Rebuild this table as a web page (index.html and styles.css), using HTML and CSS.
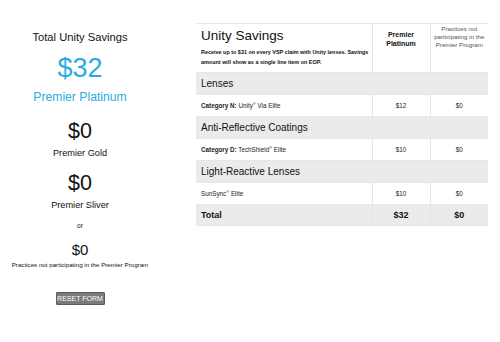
FILE: index.html
```html
<!DOCTYPE html>
<html>
<head>
<meta charset="utf-8">
<link rel="stylesheet" href="styles.css">
</head>
<body>
<div class="page">
  <aside class="summary">
    <h2 class="summary-title">Total Unity Savings</h2>
    <div class="amount amount-main">$32</div>
    <div class="tier tier-main">Premier Platinum</div>
    <div class="amount amount-mid">$0</div>
    <div class="tier">Premier Gold</div>
    <div class="amount amount-mid">$0</div>
    <div class="tier">Premier Sliver</div>
    <div class="or">or</div>
    <div class="amount amount-small">$0</div>
    <div class="tier-note">Practices not participating in the Premier Program</div>
    <button class="reset">RESET FORM</button>
  </aside>
  <table class="savings">
    <colgroup>
      <col class="c1"><col class="c2"><col class="c3">
    </colgroup>
    <thead>
      <tr class="head">
        <th class="head-main">
          <div class="head-title">Unity Savings</div>
          <div class="head-desc">Receive up to $31 on every VSP claim with Unity lenses. Savings amount will show as a single line item on EOP.</div>
        </th>
        <th class="head-col">Premier Platinum</th>
        <th class="head-col head-light">Practices not participating in the Premier Program</th>
      </tr>
    </thead>
    <tbody>
      <tr class="section"><td colspan="3">Lenses</td></tr>
      <tr class="item"><td><b>Category N:</b> Unity<sup>®</sup> Via Elite</td><td>$12</td><td>$0</td></tr>
      <tr class="section"><td colspan="3">Anti-Reflective Coatings</td></tr>
      <tr class="item"><td><b>Category D:</b> TechShield<sup>®</sup> Elite</td><td>$10</td><td>$0</td></tr>
      <tr class="section"><td colspan="3">Light-Reactive Lenses</td></tr>
      <tr class="item"><td>SunSync<sup>®</sup> Elite</td><td>$10</td><td>$0</td></tr>
      <tr class="total"><td>Total</td><td>$32</td><td>$0</td></tr>
    </tbody>
  </table>
</div>
</body>
</html>
```
FILE: styles.css
```css
html, body {
  margin: 0;
  padding: 0;
  background: #fff;
}
body {
  font-family: "Liberation Sans", Arial, sans-serif;
  color: #111;
}
.page {
  display: flex;
  align-items: flex-start;
  gap: 36px;
  padding-top: 23px;
}
.summary {
  width: 160px;
  display: flex;
  flex-direction: column;
  align-items: center;
  text-align: center;
}
.summary-title {
  font-size: 11.2px;
  font-weight: normal;
  margin: 7px 0 0;
  line-height: 14px;
}
.amount {
  line-height: 1;
}
.amount-main {
  font-size: 27px;
  line-height: 36px;
  color: #29abe2;
  margin-top: 6px;
}
.tier {
  font-size: 9.2px;
  line-height: 12px;
  margin-top: 3px;
}
.tier-main {
  font-size: 12.2px;
  line-height: 14px;
  color: #29abe2;
  margin-top: 4px;
}
.amount-mid {
  font-size: 21.5px;
  line-height: 26px;
  margin-top: 11px;
}
.tier-main + .amount-mid {
  margin-top: 14px;
}
.or {
  font-size: 6.5px;
  line-height: 8px;
  margin-top: 11px;
}
.amount-small {
  font-size: 15px;
  line-height: 16px;
  margin-top: 12px;
}
.tier-note {
  font-size: 6.2px;
  line-height: 8px;
  margin-top: 3px;
  white-space: nowrap;
}
.reset {
  margin-top: 23px;
  background: #7a7a7a;
  color: #fff;
  border: 1px solid #5c5c5c;
  border-radius: 1px;
  font-family: "Liberation Sans", Arial, sans-serif;
  font-size: 7px;
  padding: 0;
  width: 49px;
  height: 13px;
  line-height: 11px;
  white-space: nowrap;
}
.savings {
  width: 292px;
  border-collapse: collapse;
  table-layout: fixed;
}
.c1 { width: 176px; }
.c2 { width: 58px; }
.c3 { width: 58px; }
.savings td, .savings th {
  border: 1px solid #e6e6e6;
  padding: 0;
}
.head th {
  height: 42px;
  vertical-align: top;
}
.head .head-main {
  border-left: none;
}
.head .head-col:last-child {
  border-right: none;
}
.head-main {
  text-align: left;
  padding: 4px 1px 0 5px !important;
}
.head-title {
  font-size: 13.5px;
  font-weight: normal;
  line-height: 16px;
}
.head-desc {
  font-size: 5.45px;
  font-weight: bold;
  line-height: 10px;
  margin-top: 3px;
}
.head-col {
  font-size: 7px;
  font-weight: bold;
  line-height: 9px;
  padding: 6px 3px 0 !important;
  text-align: center;
}
.head-light {
  font-weight: normal;
  color: #555;
  font-size: 6.2px;
  line-height: 8px;
  padding-top: 1px !important;
}
.section td {
  background: #ebebeb;
  font-size: 10px;
  height: 21px;
  padding: 0 5px;
  border-left: none;
  border-right: none;
}
.item td {
  font-size: 6.3px;
  height: 21px;
  text-align: center;
  color: #222;
}
.item td:first-child {
  text-align: left;
  padding-left: 5px;
  border-left: none;
}
.item td:last-child {
  border-right: none;
}
.item sup {
  font-size: 4px;
  vertical-align: 3px;
  line-height: 0;
}
.total td {
  background: #ebebeb;
  font-size: 9px;
  font-weight: bold;
  height: 20px;
  text-align: center;
}
.total td:first-child {
  text-align: left;
  padding-left: 5px;
  border-left: none;
}
.total td:last-child {
  border-right: none;
}
```
